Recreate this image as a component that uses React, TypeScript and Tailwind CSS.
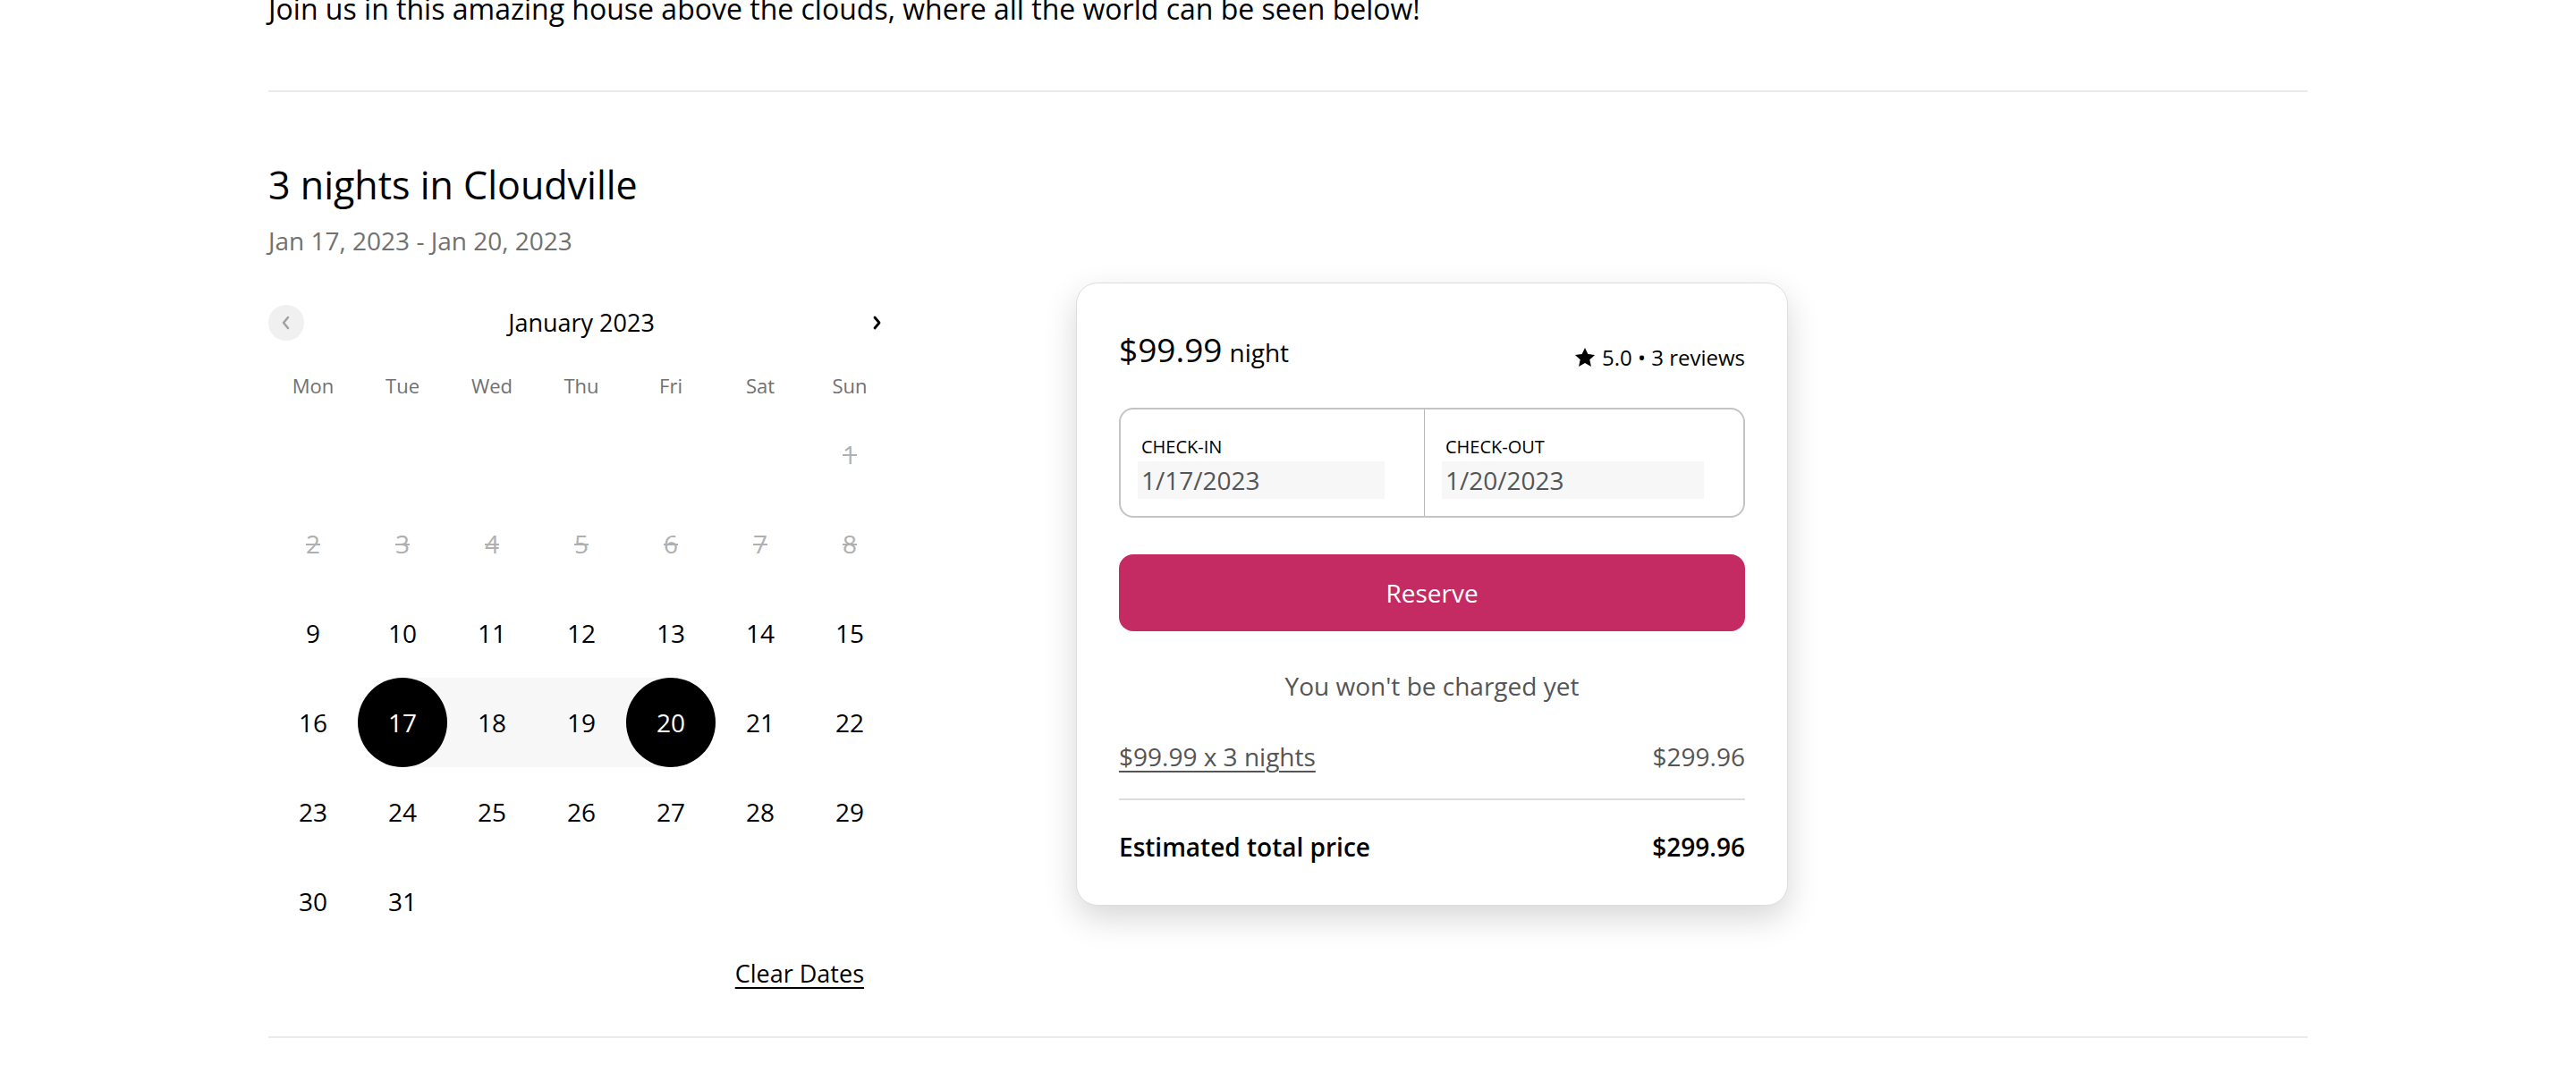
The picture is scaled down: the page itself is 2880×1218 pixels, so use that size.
import { type ReactNode } from 'react';

const weekdays = ['Mon', 'Tue', 'Wed', 'Thu', 'Fri', 'Sat', 'Sun'];

// January 2023 starts on a Sunday
const days: (number | null)[] = [null, null, null, null, null, null, ...Array.from({ length: 31 }, (_, i) => i + 1)];

const checkIn = 17;
const checkOut = 20;

const Chevron = ({ dir, className }: { dir: 'left' | 'right'; className?: string }) => (
  <svg width="12" height="16" viewBox="0 0 12 16" className={className} fill="none">
    {dir === 'left' ? (
      <polyline points="8,2 3,8 8,14" stroke="currentColor" strokeWidth="2.5" strokeLinecap="round" strokeLinejoin="round" />
    ) : (
      <polyline points="4,2 9,8 4,14" stroke="currentColor" strokeWidth="2.8" strokeLinecap="round" strokeLinejoin="round" />
    )}
  </svg>
);

const Star = () => (
  <svg width="26" height="26" viewBox="0 0 24 24" fill="currentColor">
    <path d="M12 1.8l3.1 6.6 7.1.8-5.3 4.9 1.5 7.1L12 17.6l-6.4 3.6 1.5-7.1L1.8 9.2l7.1-.8z" />
  </svg>
);

const DayCell = ({ day }: { day: number | null }) => {
  if (day === null) return <div className="h-[100px]" />;

  const disabled = day < 9;
  const isEdge = day === checkIn || day === checkOut;
  const inRange = day > checkIn && day < checkOut;

  let band = '';
  if (day === checkIn) band = 'bg-linear-to-r from-transparent from-50% to-[#f7f7f7] to-50%';
  if (day === checkOut) band = 'bg-linear-to-r from-[#f7f7f7] from-50% to-transparent to-50%';
  if (inRange) band = 'bg-[#f7f7f7]';

  let inner: ReactNode = day;
  if (isEdge) {
    inner = (
      <div className="flex h-[100px] w-[100px] items-center justify-center rounded-full bg-black text-white">{day}</div>
    );
  }

  return (
    <div
      className={`flex h-[100px] items-center justify-center text-[28px] ${band} ${
        disabled ? 'text-[#b0b0b0] line-through' : 'text-black'
      }`}
    >
      {inner}
    </div>
  );
};

const Calendar = () => (
  <div className="mt-[52px] w-[700px]">
    <div className="flex h-[40px] items-center justify-between">
      <button className="flex h-[40px] w-[40px] items-center justify-center rounded-full bg-[#f0f0f0] text-[#a0a0a0]">
        <Chevron dir="left" />
      </button>
      <span className="text-[27px] leading-[40px]">January 2023</span>
      <button className="flex h-[40px] w-[40px] items-center justify-center text-black">
        <Chevron dir="right" />
      </button>
    </div>

    <div className="mt-[25px] grid h-[50px] grid-cols-7 items-center">
      {weekdays.map((d) => (
        <div key={d} className="text-center text-[22px] text-[#717171]">
          {d}
        </div>
      ))}
    </div>

    <div className="mt-[2px] grid grid-cols-7">
      {days.map((d, i) => (
        <DayCell key={i} day={d} />
      ))}
    </div>

    <div className="mt-[11px] pr-[34px] text-right">
      <button className="text-[27px] leading-[40px] underline underline-offset-[5px]">Clear Dates</button>
    </div>
  </div>
);

const BookingCard = () => (
  <aside className="ml-[203px] mt-[137px] w-[796px] rounded-[24px] border border-[#dddddd] bg-white px-[47px] pb-[45px] pt-[50px] shadow-[0_14px_36px_rgba(0,0,0,0.16)]">
    {/* Price + rating */}
    <div className="flex items-end justify-between">
      <div className="leading-[48px]">
        <span className="text-[37px] font-medium">$99.99</span>
        <span className="ml-[8px] text-[28px]">night</span>
      </div>
      <div className="mb-[7px] flex items-center gap-[6px] text-[24px] leading-[32px]">
        <Star />
        <span>5.0 • 3 reviews</span>
      </div>
    </div>

    {/* Dates */}
    <div className="mt-[33px] flex rounded-[16px] border-2 border-[#c4c4c4]">
      <div className="w-[340px] border-r border-[#b8b8b8] pb-[19px] pl-[19px] pr-[44px] pt-[28px]">
        <div className="pl-[4px] text-[20px] leading-[28px]">CHECK-IN</div>
        <input
          readOnly
          value="1/17/2023"
          className="mt-[2px] h-[42px] w-full bg-[#f7f7f7] px-[4px] text-[28px] text-[#555555] outline-none"
        />
      </div>
      <div className="flex-1 pb-[19px] pl-[19px] pr-[44px] pt-[28px]">
        <div className="pl-[4px] text-[20px] leading-[28px]">CHECK-OUT</div>
        <input
          readOnly
          value="1/20/2023"
          className="mt-[2px] h-[42px] w-full bg-[#f7f7f7] px-[4px] text-[28px] text-[#555555] outline-none"
        />
      </div>
    </div>

    <button className="mt-[41px] flex h-[86px] w-full items-center justify-center rounded-[16px] bg-[#c42b62] text-[28px] font-medium text-white">
      Reserve
    </button>

    <p className="mt-[41px] text-center text-[28px] leading-[40px] text-[#555555]">You won't be charged yet</p>

    <div className="mt-[39px] flex justify-between text-[28px] leading-[40px] text-[#555555]">
      <span className="underline underline-offset-[5px]">$99.99 x 3 nights</span>
      <span>$299.96</span>
    </div>

    <div className="mt-[27px] border-t-2 border-[#dddddd]" />

    <div className="mt-[32px] flex justify-between text-[28px] font-semibold leading-[40px]">
      <span>Estimated total price</span>
      <span>$299.96</span>
    </div>
  </aside>
);

const App = () => {
  return (
    <div className="min-h-screen overflow-hidden bg-white font-['Open_Sans',sans-serif] text-black">
      <div className="mx-auto w-[2280px]">
        <p className="-mt-[14px] border-b-2 border-[#ebebeb] pb-[67px] text-[32px] leading-[48px]">
          Join us in this amazing house above the clouds, where all the world can be seen below!
        </p>

        <section className="flex items-start border-b-2 border-[#ebebeb] pb-[50px] pt-[76px]">
          <div className="w-[700px]">
            <h2 className="text-[43px] leading-[56px]">3 nights in Cloudville</h2>
            <p className="mt-[14px] text-[28px] leading-[40px] text-[#717171]">Jan 17, 2023 - Jan 20, 2023</p>
            <Calendar />
          </div>
          <BookingCard />
        </section>
      </div>
    </div>
  );
};

export default App;
